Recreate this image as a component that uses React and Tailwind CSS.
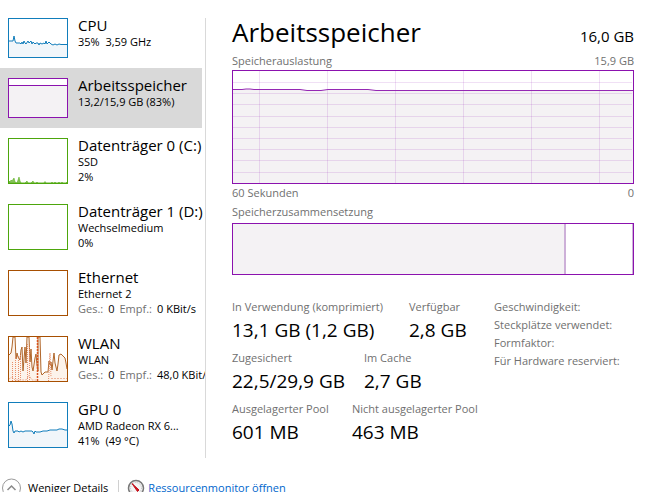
const panels = [
  { id: "cpu", title: "CPU", lines: ["35%  3,59 GHz"], graph: CpuGraph, frame: "h-10 border-[#117dbb]" },
  { id: "memory", title: "Arbeitsspeicher", lines: ["13,2/15,9 GB (83%)"], graph: MemoryGraph, frame: "h-10 border-[#8b12ae]", selected: true },
  { id: "disk0", title: "Datenträger 0 (C:)", lines: ["SSD", "2%"], graph: DiskGraph, frame: "h-[46px] border-[#4da60c]" },
  { id: "disk1", title: "Datenträger 1 (D:)", lines: ["Wechselmedium", "0%"], frame: "h-[46px] border-[#4da60c]" },
  { id: "ethernet", title: "Ethernet", lines: ["Ethernet 2"], traffic: ["0", "0 KBit/s"], frame: "h-[46px] border-[#a74f01]" },
  { id: "wlan", title: "WLAN", lines: ["WLAN"], traffic: ["0", "48,0 KBit/s"], graph: WlanGraph, frame: "h-[46px] border-[#a74f01]" },
  { id: "gpu", title: "GPU 0", lines: ["AMD Radeon RX 6...", "41%  (49 °C)"], graph: GpuGraph, frame: "h-[46px] border-[#117dbb]" },
];

function CpuGraph() {
  const line = "M0 22H3L4 22L5 17L6 22L7 24H11L12 25L13 23L14 25L15 22L16 24L17 25L19 22L20 24L22 22L23 25L24 23L26 25L27 24L29 24L30 26L31 24L33 25L35 24L36 25L37 22L38 25L40 23L42 25L44 26L46 25L48 26L50 25L52 25.500H58";
  return (
    <svg className="block h-full w-full" viewBox="0 0 58 38" aria-hidden="true">
      <path d={line + "V38H0Z"} fill="#f1f6fa" />
      <path d={line} fill="none" stroke="#117dbb" strokeWidth="1" />
    </svg>
  );
}

function MemoryGraph() {
  return (
    <svg className="block h-full w-full" viewBox="0 0 58 38" aria-hidden="true">
      <path d="M0 7H58V38H0Z" fill="#f4f2f4" />
      <path d="M0 6.5H58" stroke="#8b12ae" />
    </svg>
  );
}

function DiskGraph() {
  return (
    <svg className="block h-full w-full" viewBox="0 0 58 44" aria-hidden="true">
      <path
        d="M0 44V42L1 43L2 41L3 42L5 39L6 43L8 44L9 41L10 38L11 42L12 44H16L18 42L19 44H22L24 42L25 44H27L28 43L29 44H35L36 42.500L37 44H42L43 43L44 44H45L46 43L47 44H49L50 43L51 44H52L53 43L54 44H57L58 43V44Z"
        fill="#86c35a"
        stroke="#4da60c"
        strokeWidth="0.5"
      />
    </svg>
  );
}

function WlanGraph() {
  const line = "M0 18L2 16L3 10L4 0H6L7 22L8 16L9 20L11 23L12 13L13 10L14 34L15 22L16 10L17 26L18 0H20L21 25L22 12L23 30L24 34L26 21L27 17L28 28L29 34V0H31L32 35L33 38L36 35H39L40 24L41 28L42 25L43 33L44 24L45 16L46 26L48 34L49 27L50 18L52 17L54 19L56 21L57 26L58 32";
  return (
    <svg className="block h-full w-full" viewBox="0 0 58 44" aria-hidden="true">
      <path d={line + "V44H0Z"} fill="#fcf3eb" />
      <path d={line} fill="none" stroke="#b0662a" strokeWidth="1" />
      <path d="M3.500 44V24M6.500 44V18M9.500 44V18M11.500 18V44M18.500 44V6M20.500 10V44M39.500 44L41 16L42 40" fill="none" stroke="#e88e68" strokeWidth="1" strokeDasharray="1 1" />
      <path d="M28.500 44V0" fill="none" stroke="#d9531e" strokeWidth="1.500" strokeDasharray="2 1" />
      <path d="M0 42L3 40L6 43H17L20 38L23 43H27M42 41.500H58" fill="none" stroke="#edb59c" strokeWidth="1" strokeDasharray="2 1" />
    </svg>
  );
}

function GpuGraph() {
  const line = "M0 23L1 22L2 18L3 21L4 28L5 30L6 28H9L10 29L12 28L14 29L16 28H23L24 29L25 31L26 28L27 29H31L34 28H38L41 27H48L50 26H53L56 27H58";
  return (
    <svg className="block h-full w-full" viewBox="0 0 58 44" aria-hidden="true">
      <path d={line + "V44H0Z"} fill="#f1f6fa" />
      <path d={line} fill="none" stroke="#117dbb" />
    </svg>
  );
}

function PanelButton({ title, lines, traffic, graph: Graph, frame, selected }) {
  return (
    <button
      type="button"
      aria-pressed={Boolean(selected)}
      className={"flex w-full gap-2.5 pl-2 text-left whitespace-nowrap " + (selected ? "bg-[#d9d9d9]" : "")}
    >
      <span className="block py-2.5">
        <span className={"block w-[60px] border bg-white " + frame}>{Graph && <Graph />}</span>
      </span>
      <span className="block pt-2 text-[11px] leading-[15px]">
        <span className="block text-[15px] leading-[18px]">{title}</span>
        {lines.map((line) => (
          <span key={line} className="block whitespace-pre">{line}</span>
        ))}
        {traffic && (
          <span className="flex gap-[5px]">
            <span className="text-[#707070]">Ges.:</span>
            <span>{traffic[0]}</span>
            <span className="text-[#707070]">Empf.:</span>
            <span>{traffic[1]}</span>
          </span>
        )}
      </span>
    </button>
  );
}

const gridColumns = [26, 94, 162, 230, 298, 366];
const gridRows = [11, 22, 33, 45, 56, 67, 78, 89, 101];

function UsageChart() {
  const line = "M0 18.500H9L13 18H17L21 18.500H67L74 19.500H88L95 18.500H135L143 19.500H400";
  return (
    <svg className="block h-[114px] w-full border border-[#8b12ae]" viewBox="0 0 400 112" preserveAspectRatio="none" role="img" aria-label="Speicherauslastung">
      <path d={line + "V112H0Z"} fill="#f4f2f4" />
      <g fill="#8b12ae" fillOpacity="0.13">
        {gridColumns.map((x) => <rect key={x} x={x} y="0" width="1" height="112" />)}
        {gridRows.map((y) => <rect key={y} x="0" y={y} width="399" height="1" />)}
      </g>
      <path d={line} fill="none" stroke="#9528b4" />
    </svg>
  );
}

const stats = [
  { columns: "grid-cols-[157px_auto]", items: [["In Verwendung (komprimiert)", "13,1 GB (1,2 GB)"], ["Verfügbar", "2,8 GB"]] },
  { columns: "grid-cols-[112px_auto]", items: [["Zugesichert", "22,5/29,9 GB"], ["Im Cache", "2,7 GB"]] },
  { columns: "grid-cols-[100px_auto]", items: [["Ausgelagerter Pool", "601 MB"], ["Nicht ausgelagerter Pool", "463 MB"]] },
];

const details = ["Geschwindigkeit:", "Steckplätze verwendet:", "Formfaktor:", "Für Hardware reserviert:"];

export default function App() {
  return (
    <div className="flex h-screen flex-col overflow-hidden bg-white font-['Open_Sans',sans-serif] text-black">
      <div className="flex shrink-0">
        <nav className="w-[205px] shrink-0 overflow-hidden pt-2 pr-[3px]" aria-label="Leistung">
          {panels.map((panel) => <PanelButton key={panel.id} {...panel} />)}
        </nav>
        <main className="mt-[18px] min-w-0 flex-1 border-l border-[#d9d9d9] pr-[18px] pl-[26px] text-[11px] leading-[18px] text-[#707070]">
          <header className="flex items-baseline justify-between pb-1.5 text-black">
            <h1 className="text-[26px] leading-[28px]">Arbeitsspeicher</h1>
            <span className="text-[15px]">16,0 GB</span>
          </header>
          <div className="flex justify-between">
            <span>Speicherauslastung</span>
            <span>15,9 GB</span>
          </div>
          <UsageChart />
          <div className="flex justify-between">
            <span>60 Sekunden</span>
            <span>0</span>
          </div>
          <h2 className="pb-0.5 leading-[19px]">Speicherzusammensetzung</h2>
          <div className="flex h-[52px] border border-[#8b12ae]">
            <div className="w-[83.3%] border-r-2 border-[#cdb0d8] bg-[#f4f2f4]" />
            <div className="flex-1 border-r border-[#cdb0d8]" />
          </div>
          <div className="flex pt-[23px]">
            <div className="w-[262px] shrink-0 whitespace-nowrap">
              {stats.map(({ columns, items }) => (
                <dl key={columns} className={"grid h-[51px] gap-5 " + columns}>
                  {items.map(([label, value]) => (
                    <div key={label}>
                      <dt>{label}</dt>
                      <dd className="text-[19px] leading-[28px] text-black">{value}</dd>
                    </div>
                  ))}
                </dl>
              ))}
            </div>
            <ul className="whitespace-nowrap">
              {details.map((detail) => <li key={detail}>{detail}</li>)}
            </ul>
          </div>
        </main>
      </div>
      <footer className="mt-4 flex h-7 shrink-0 items-center text-[11px]">
        <button type="button" className="flex items-center gap-1.5 pl-0.5">
          <svg className="h-5 w-5" viewBox="0 0 20 20" fill="none" aria-hidden="true">
            <circle cx="9.500" cy="10" r="9" stroke="#9a9a9a" />
            <path d="M5.500 12L9.500 8L13.500 12" stroke="#8a8a8a" strokeWidth="1.500" />
          </svg>
          Weniger Details
        </button>
        <span className="mr-2 ml-2.5 h-4 w-px bg-[#d0d0d0]" />
        <a href="#ressourcenmonitor" className="flex items-center gap-[3px] text-[#0066cc]">
          <svg className="h-[18px] w-[18px]" viewBox="0 0 18 18" fill="none" aria-hidden="true">
            <circle cx="9" cy="9" r="7.500" fill="#f4f4f4" stroke="#777" strokeWidth="1.500" />
            <circle cx="9" cy="9" r="5.500" stroke="#bcbcbc" strokeDasharray="1 1" />
            <path d="M5 4.500L12 11L10.500 12.500Z" fill="#d3141c" stroke="#c00c18" />
          </svg>
          Ressourcenmonitor öffnen
        </a>
      </footer>
    </div>
  );
}
